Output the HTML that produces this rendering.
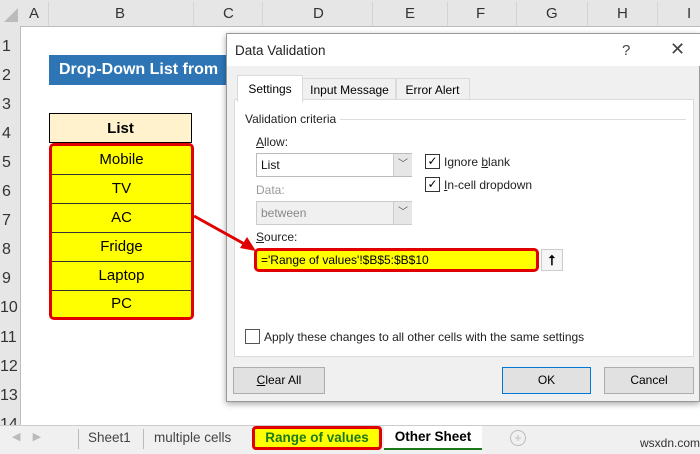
<!DOCTYPE html>
<html><head><style>
body{margin:0;width:700px;height:453px;overflow:hidden;background:#fff;font-family:"Liberation Sans",sans-serif;position:relative}
.a{position:absolute}
.hdr{background:#e6e6e6;color:#333;font-size:15px}
.ln{background:#d4d4d4}
</style></head><body>
<div class="a hdr" style="left:0;top:0;width:700px;height:26px;border-bottom:1px solid #bdbdbd"></div>
<div class="a" style="left:4px;top:8px;width:0;height:0;border-left:14px solid transparent;border-bottom:14px solid #bbb"></div>
<div class="a" style="left:0;top:26px;width:20px;height:400px;background:#e6e6e6;border-right:1px solid #bdbdbd"></div>
<div class="a" style="left:0;top:0;font-size:15px;color:#333">
<span class="a" style="left:29px;top:5px">A</span><span class="a" style="left:115px;top:5px">B</span><span class="a" style="left:223px;top:5px">C</span><span class="a" style="left:313px;top:5px">D</span><span class="a" style="left:405px;top:5px">E</span><span class="a" style="left:476px;top:5px">F</span><span class="a" style="left:546px;top:5px">G</span><span class="a" style="left:617px;top:5px">H</span><span class="a" style="left:687px;top:5px">I</span>
</div>
<div class="a ln" style="left:48px;top:2px;width:1px;height:24px"></div>
<div class="a ln" style="left:193px;top:2px;width:1px;height:24px"></div>
<div class="a ln" style="left:262px;top:2px;width:1px;height:24px"></div>
<div class="a ln" style="left:372px;top:2px;width:1px;height:24px"></div>
<div class="a ln" style="left:447px;top:2px;width:1px;height:24px"></div>
<div class="a ln" style="left:516px;top:2px;width:1px;height:24px"></div>
<div class="a ln" style="left:587px;top:2px;width:1px;height:24px"></div>
<div class="a ln" style="left:657px;top:2px;width:1px;height:24px"></div>
<div class="a" style="left:2px;top:0;font-size:16px;color:#333;line-height:29px">
<div class="a" style="top:32px">1</div><div class="a" style="top:61px">2</div><div class="a" style="top:90px">3</div><div class="a" style="top:119px">4</div><div class="a" style="top:148px">5</div><div class="a" style="top:177px">6</div><div class="a" style="top:206px">7</div><div class="a" style="top:235px">8</div><div class="a" style="top:264px">9</div><div class="a" style="top:293px;left:-2px">10</div><div class="a" style="top:323px;left:-2px">11</div><div class="a" style="top:352px;left:-2px">12</div><div class="a" style="top:381px;left:-2px">13</div><div class="a" style="top:410px;left:-2px">14</div>
</div>
<div class="a" style="left:49px;top:55px;width:180px;height:30px;background:#2e75b6;color:#fff;font-weight:bold;font-size:16px;line-height:30px;padding-left:10px;box-sizing:border-box;white-space:nowrap;overflow:hidden">Drop-Down List from</div>
<div class="a" style="left:49px;top:113px;width:143px;height:30px;background:#fff2cc;border:1px solid #000;box-sizing:border-box;text-align:center;font-weight:bold;font-size:15px;line-height:30px">List</div>
<div class="a" style="left:49px;top:143px;width:145px;height:177px;background:#ff0;border:3px solid #e00000;border-radius:5px;box-sizing:border-box;font-size:15px;text-align:center">
<div style="height:28px;line-height:28px;border-bottom:1px solid #333">Mobile</div>
<div style="height:28px;line-height:28px;border-bottom:1px solid #333">TV</div>
<div style="height:28px;line-height:28px;border-bottom:1px solid #333">AC</div>
<div style="height:28px;line-height:28px;border-bottom:1px solid #333">Fridge</div>
<div style="height:28px;line-height:28px;border-bottom:1px solid #333">Laptop</div>
<div style="height:26px;line-height:26px">PC</div>
</div>
<div class="a" style="left:226px;top:33px;width:474px;height:369px;background:#f0f0f0;border:1px solid #999;box-shadow:0 2px 6px rgba(0,0,0,.35);box-sizing:border-box"></div>
<div class="a" style="left:227px;top:34px;width:473px;height:32px;background:#fff"></div>
<div class="a" style="left:235px;top:43px;font-size:13.5px;color:#222">Data Validation</div>
<div class="a" style="left:622px;top:42px;font-size:15px;color:#444">?</div>
<div class="a" style="left:670px;top:39px;font-size:18px;color:#444">✕</div>
<div class="a" style="left:234px;top:99px;width:460px;height:258px;background:#fff;border:1px solid #dadada;box-sizing:border-box"></div>
<div class="a" style="left:237px;top:75px;width:64px;height:26px;background:#fff;border:1px solid #dadada;border-bottom:none;font-size:12px;line-height:26px;text-align:center">Settings</div>
<div class="a" style="left:302px;top:78px;width:93px;height:21px;border:1px solid #dadada;border-bottom:none;font-size:12px;line-height:22px;text-align:center">Input Message</div>
<div class="a" style="left:395px;top:78px;width:73px;height:21px;border:1px solid #dadada;border-bottom:none;font-size:12px;line-height:22px;text-align:center">Error Alert</div>
<div class="a" style="left:245px;top:112px;font-size:12px;color:#222">Validation criteria</div>
<div class="a" style="left:340px;top:119px;width:346px;height:1px;background:#ddd"></div>
<div class="a" style="left:256px;top:135px;font-size:12px;color:#222"><u>A</u>llow:</div>
<div class="a" style="left:256px;top:153px;width:156px;height:24px;border:1px solid #bbb;box-sizing:border-box;font-size:12px;line-height:22px;padding-left:4px;color:#111">List</div>
<div class="a" style="left:393px;top:154px;width:18px;height:22px;background:#e6e6e6;border-left:1px solid #ccc;font-size:10px;text-align:center;line-height:22px;color:#555">﹀</div>
<div class="a" style="left:256px;top:183px;font-size:12px;color:#999">Data:</div>
<div class="a" style="left:256px;top:201px;width:156px;height:24px;border:1px solid #ccc;background:#f0f0f0;box-sizing:border-box;font-size:12px;line-height:22px;padding-left:4px;color:#888">between</div>
<div class="a" style="left:393px;top:202px;width:18px;height:22px;background:#e6e6e6;border-left:1px solid #ccc;font-size:10px;text-align:center;line-height:22px;color:#555">﹀</div>
<div class="a" style="left:425px;top:154px;width:13px;height:13px;border:1px solid #333;font-size:12px;line-height:13px;text-align:center">✓</div>
<div class="a" style="left:444px;top:155px;font-size:12px;color:#222">Ignore <u>b</u>lank</div>
<div class="a" style="left:425px;top:177px;width:13px;height:13px;border:1px solid #333;font-size:12px;line-height:13px;text-align:center">✓</div>
<div class="a" style="left:444px;top:178px;font-size:12px;color:#222"><u>I</u>n-cell dropdown</div>
<div class="a" style="left:256px;top:230px;font-size:12px;color:#222"><u>S</u>ource:</div>
<div class="a" style="left:254px;top:248px;width:285px;height:24px;background:#ff0;border:3px solid #e00000;border-radius:5px;box-sizing:border-box;font-size:12px;line-height:18px;padding-left:4px">='Range of values'!$B$5:$B$10</div>
<div class="a" style="left:541px;top:249px;width:22px;height:22px;border:1px solid #ccc;background:#f5f5f5;box-sizing:border-box;font-size:14px;font-weight:bold;text-align:center;line-height:20px">⭡</div>
<div class="a" style="left:245px;top:329px;width:13px;height:13px;border:1px solid #555"></div>
<div class="a" style="left:264px;top:330px;font-size:12px;color:#222">Apply these changes to all other cells with the same settings</div>
<div class="a" style="left:233px;top:367px;width:92px;height:27px;background:#e1e1e1;border:1px solid #adadad;box-sizing:border-box;font-size:12px;text-align:center;line-height:25px"><u>C</u>lear All</div>
<div class="a" style="left:502px;top:367px;width:89px;height:27px;background:#e1e1e1;border:1px solid #0078d7;box-sizing:border-box;font-size:12px;text-align:center;line-height:25px">OK</div>
<div class="a" style="left:604px;top:367px;width:90px;height:27px;background:#e1e1e1;border:1px solid #adadad;box-sizing:border-box;font-size:12px;text-align:center;line-height:25px">Cancel</div>
<svg class="a" style="left:0;top:0" width="700" height="453"><line x1="194" y1="216" x2="248" y2="246" stroke="#e00000" stroke-width="3"/><polygon points="256,251 240,248 247,237" fill="#e00000"/></svg>
<div class="a" style="left:0;top:425px;width:700px;height:28px;background:#f0f0f0;border-top:1px solid #ccc"></div>
<div class="a" style="left:12px;top:430px;font-size:11px;color:#bbb">◀ &nbsp;&nbsp; ▶</div>
<div class="a" style="left:78px;top:429px;width:1px;height:20px;background:#bbb"></div>
<div class="a" style="left:88px;top:430px;font-size:13.5px;color:#444">Sheet1</div>
<div class="a" style="left:143px;top:429px;width:1px;height:20px;background:#bbb"></div>
<div class="a" style="left:154px;top:430px;font-size:13.5px;color:#444">multiple cells</div>
<div class="a" style="left:252px;top:426px;width:130px;height:24px;background:#ff0;border:3px solid #e00000;border-radius:4px;box-sizing:border-box;font-size:13.5px;font-weight:bold;color:#1a7a1a;text-align:center;line-height:18px">Range of values</div>
<div class="a" style="left:384px;top:426px;width:98px;height:24px;background:#fff;border-bottom:2px solid #1a7a1a;box-sizing:border-box;font-size:13.5px;font-weight:bold;text-align:center;line-height:22px">Other Sheet</div>
<div class="a" style="left:510px;top:430px;width:14px;height:14px;border:1px solid #bbb;border-radius:50%;font-size:12px;color:#bbb;text-align:center;line-height:14px">+</div>
<div class="a" style="left:640px;top:436px;font-size:12px;color:#333">wsxdn.com</div>
</body></html>
